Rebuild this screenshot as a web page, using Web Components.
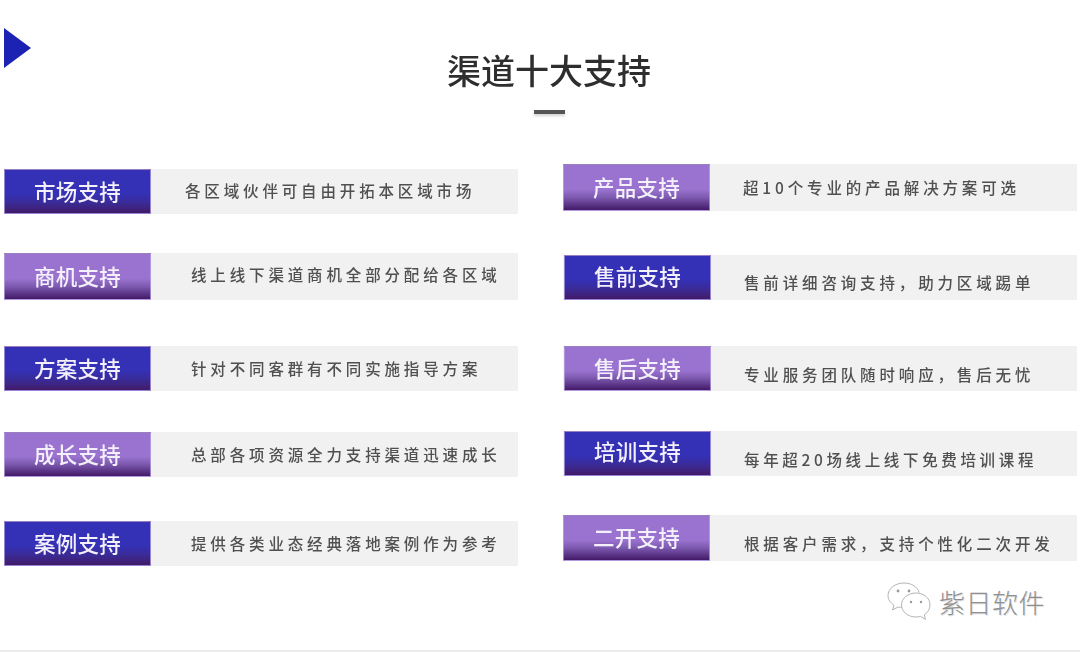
<!DOCTYPE html>
<html lang="zh">
<head>
<meta charset="utf-8">
<title>渠道十大支持</title>
<style>
  html, body { margin: 0; padding: 0; background: #fff; }
  body { width: 1080px; height: 652px; overflow: hidden; font-family: "Liberation Sans", "Noto Sans CJK SC", sans-serif; }
</style>
</head>
<body>
<support-page>
  <section-head slot="head">渠道十大支持</section-head>

  <div slot="left">
    <support-row top="169" h="45" indent="34" dy="-1" kind="blue" label="市场支持">各区域伙伴可自由开拓本区域市场</support-row>
    <support-row top="39" h="47" indent="40" dy="-2" kind="purple" label="商机支持">线上线下渠道商机全部分配给各区域</support-row>
    <support-row top="46" h="45" indent="40" dy="0" kind="blue" label="方案支持">针对不同客群有不同实施指导方案</support-row>
    <support-row top="41" h="45" indent="40" dy="0" kind="purple" label="成长支持">总部各项资源全力支持渠道迅速成长</support-row>
    <support-row top="44" h="45" indent="40" dy="0" kind="blue" label="案例支持">提供各类业态经典落地案例作为参考</support-row>
  </div>

  <div slot="right">
    <support-row top="164" h="47" indent="33" dy="0" kind="purple" label="产品支持">超10个专业的产品解决方案可选</support-row>
    <support-row top="44" h="45" shift="1" ldy="-1" indent="33" dy="5" kind="blue" label="售前支持">售前详细咨询支持，助力区域踢单</support-row>
    <support-row top="46" h="45" shift="1" indent="33" dy="6" kind="purple" label="售后支持">专业服务团队随时响应，售后无忧</support-row>
    <support-row top="40" h="45" shift="1" ldy="-2" indent="33" dy="6" ls="3.65" kind="blue" label="培训支持">每年超20场线上线下免费培训课程</support-row>
    <support-row top="39" h="46" indent="34" dy="5" kind="purple" label="二开支持">根据客户需求，支持个性化二次开发</support-row>
  </div>

  <wechat-mark slot="mark">紫日软件</wechat-mark>
</support-page>

<script>
class SupportPage extends HTMLElement {
  constructor() {
    super();
    this.attachShadow({mode: 'open'}).innerHTML = `
    <style>
      :host { display: block; position: relative; width: 1080px; height: 652px; box-sizing: border-box; background: #fff; border-bottom: 2px solid #ececec; }
      .soft { filter: blur(.35px); }
      .cols { display: grid; grid-template-columns: 514px 514px; column-gap: 45px; padding-left: 4px; }
      .mark { position: absolute; right: 35px; top: 582px; }
    </style>
    <div class="soft">
      <slot name="head"></slot>
      <div class="cols">
        <slot name="left"></slot>
        <slot name="right"></slot>
      </div>
    </div>
    <div class="mark"><slot name="mark"></slot></div>
    `;
  }
}

class SectionHead extends HTMLElement {
  constructor() {
    super();
    this.attachShadow({mode: 'open'}).innerHTML = `
    <style>
      :host { display: grid; grid-template-columns: 443px auto; height: 0; padding-left: 4px; }
      .arrow { width: 27px; height: 40px; margin-top: 28px; background: #1b22b4; clip-path: polygon(0 0, 100% 50%, 0 100%); }
      .title { display: flex; flex-direction: column; align-items: center; width: 204px; }
      h1 { margin: 46px 0 0; font: 500 34px/48px "Noto Sans CJK SC", sans-serif; color: #2e2e2e; letter-spacing: 0; white-space: nowrap; }
      i { display: block; width: 31px; height: 4px; margin-top: 16px; background: #555; box-shadow: 0 2px 3px rgba(0,0,0,.18); }
    </style>
    <div class="arrow"></div>
    <div class="title"><h1><slot></slot></h1><i></i></div>
    `;
  }
}

class SupportRow extends HTMLElement {
  constructor() {
    super();
    this.attachShadow({mode: 'open'});
  }

  connectedCallback() {
    const top = this.getAttribute('top');
    const h = this.getAttribute('h');
    const indent = this.getAttribute('indent');
    const dy = Number(this.getAttribute('dy'));
    const shift = Number(this.getAttribute('shift') || 0);
    const ldy = Number(this.getAttribute('ldy') || 0);
    const ls = this.getAttribute('ls') || '3.85';
    const fill = this.getAttribute('kind') === 'blue'
      ? 'linear-gradient(#3431b6 0%, #3431b6 55%, #3a2a94 78%, #431a68 100%)'
      : 'linear-gradient(#9a72cf 0%, #9a72cf 55%, #7d5ab0 72%, #431a68 100%)';
    this.shadowRoot.innerHTML = `
    <style>
      :host { display: flex; height: ${h}px; margin-top: ${top}px; background: #f1f1f1; }
      .label { flex: 0 0 147px; box-sizing: border-box; display: flex; align-items: center; justify-content: center;
        margin-left: ${shift}px; background: ${fill}; border: 1px solid rgba(190,170,230,.7); color: #f4f0fb;
        font: 500 21.5px/1 "Noto Sans CJK SC", sans-serif; letter-spacing: 0.2px; }
      .label span { position: relative; top: ${ldy - 1}px; }
      .text { align-self: center; padding-left: ${indent}px; position: relative; top: ${dy}px;
        font: 500 15.5px/1.2 "Noto Sans CJK SC", sans-serif; letter-spacing: ${ls}px; color: #505050; white-space: nowrap; }
    </style>
    <div class="label"><span>${this.getAttribute('label')}</span></div>
    <div class="text"><slot></slot></div>
    `;
  }
}

class WechatMark extends HTMLElement {
  constructor() {
    super();
    this.attachShadow({mode: 'open'}).innerHTML = `
    <style>
      :host { display: flex; align-items: center; gap: 8px; color: #8f8f8f; }
      svg { width: 44px; height: 40px; display: block; }
      span { font: 300 26px/1 "Noto Sans CJK SC", sans-serif; letter-spacing: 0.5px; text-shadow: 1px 1px 0 #e2e2e2; }
    </style>
    <svg viewBox="0 0 44 40" fill="none" stroke="#b4b4b4" stroke-width="1">
      <path d="M17 1C8 1 1 6.700 1 13.500c0 4 2.400 7.400 6 9.700L5.500 28l5.600-3c1.600.4 3.200.6 5 .6" fill="#fff"/>
      <path d="M17 1c7.500 0 13.600 4 15.200 9.500" />
      <path d="M29 11c-8 0-14.500 5.200-14.500 12S21 35 29 35c1.600 0 3-.2 4.500-.6l5 3-1.300-4.600c3.600-2.300 5.800-5.600 5.800-9.800C43 16.200 37 11 29 11z" fill="#fff"/>
      <g fill="#999" stroke="none">
        <circle cx="11" cy="9" r="1.400"/><circle cx="22" cy="9" r="1.400"/>
        <circle cx="24" cy="20" r="1.200"/><circle cx="34" cy="20" r="1.200"/>
      </g>
    </svg>
    <span><slot></slot></span>
    `;
  }
}

customElements.define('support-page', SupportPage);
customElements.define('section-head', SectionHead);
customElements.define('support-row', SupportRow);
customElements.define('wechat-mark', WechatMark);
</script>
</body>
</html>
